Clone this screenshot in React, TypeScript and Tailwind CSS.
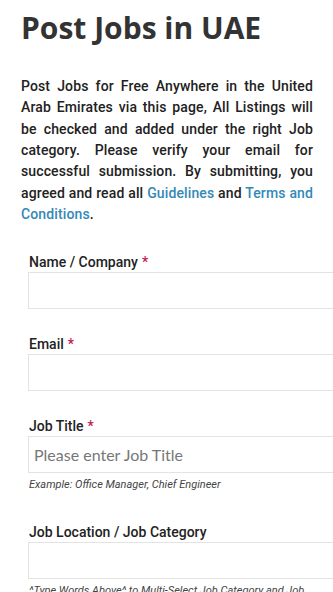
import React from "react"

const fields = [
  { label: "Name / Company", required: true },
  { label: "Email", required: true },
  {
    label: "Job Title",
    required: true,
    placeholder: "Please enter Job Title",
    hint: "Example: Office Manager, Chief Engineer",
  },
  {
    label: "Job Location / Job Category",
    required: false,
    hint: "^Type Words Above^ to Multi-Select Job Category and Job Location",
  },
]

export default function App() {
  return (
    <div className="w-[333px] overflow-hidden bg-white font-['Roboto',sans-serif] text-[#222]">
      <div className="pl-[21px] pr-[20px]">
        <h1 className="pt-[10px] font-['Open_Sans',sans-serif] text-[30px] leading-[36px] font-bold text-[#333] whitespace-nowrap">
          Post Jobs in UAE
        </h1>

        <p className="mt-[30px] text-justify text-[14px] leading-[21.33px] font-medium tracking-[0.12px] text-[#222]">
          Post Jobs for Free Anywhere in the United Arab Emirates via this page, All Listings will be
          checked and added under the right Job category. Please verify your email for successful
          submission. By submitting, you agreed and read all{" "}
          <a href="#" className="text-[#3389b6]">
            Guidelines
          </a>{" "}
          and{" "}
          <a href="#" className="text-[#3389b6]">
            Terms and Conditions
          </a>
          .
        </p>
      </div>

      {/* Form */}
      <form className="mt-[27px] pl-[28px]">
        {fields.map((f) => (
          <div key={f.label} className={f.hint ? "mb-[29px]" : "mb-[25px]"}>
            <label className="block pl-px text-[14px] leading-[20px] font-medium text-[#222]">
              {f.label}
              {f.required && <span className="ml-[4px] text-[#c4164a]">*</span>}
            </label>
            <input
              type="text"
              placeholder={f.placeholder}
              className="block h-[37px] w-[340px] border border-[#e3e3e3] bg-white px-[5px] font-['Lato',sans-serif] text-[16px] text-[#333] outline-none placeholder:text-[#777]"
            />
            {f.hint && (
              <p className="mt-[4px] pl-px pr-[14px] text-[11px] leading-[16px] italic text-[#444]">
                {f.hint}
              </p>
            )}
          </div>
        ))}
      </form>
    </div>
  )
}
